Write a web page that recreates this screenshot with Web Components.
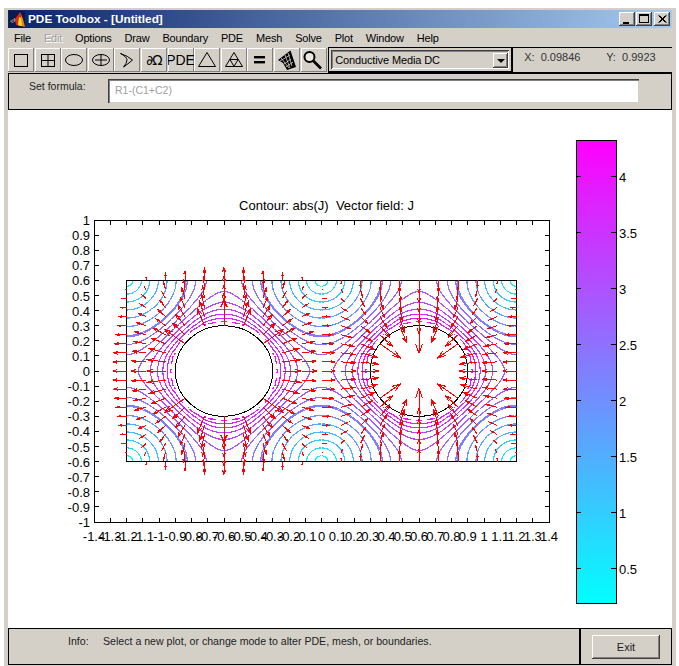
<!DOCTYPE html>
<html>
<head>
<meta charset="utf-8">
<title>PDE Toolbox</title>
<style>
    html, body { margin: 0; padding: 0; background: #fff; }
    body { font-family: "Liberation Sans", Arial, sans-serif; }
</style>
</head>
<body>
<pde-window>
    <pde-titlebar>PDE Toolbox - [Untitled]</pde-titlebar>
    <pde-menubar>
        <pde-menu>File</pde-menu>
        <pde-menu disabled>Edit</pde-menu>
        <pde-menu>Options</pde-menu>
        <pde-menu>Draw</pde-menu>
        <pde-menu>Boundary</pde-menu>
        <pde-menu>PDE</pde-menu>
        <pde-menu>Mesh</pde-menu>
        <pde-menu>Solve</pde-menu>
        <pde-menu>Plot</pde-menu>
        <pde-menu>Window</pde-menu>
        <pde-menu>Help</pde-menu>
    </pde-menubar>
    <pde-toolbar></pde-toolbar>
    <pde-formula></pde-formula>
    <pde-plot></pde-plot>
    <pde-status></pde-status>
</pde-window>

<script>
class PdeWindow extends HTMLElement {
    constructor() {
        super();
        this.attachShadow({ mode: 'open' });
    }

    connectedCallback() {
        this.shadowRoot.innerHTML = `
            <style>
                :host {
                    display: flex;
                    flex-direction: column;
                    box-sizing: border-box;
                    width: 672px;
                    height: 658px;
                    margin: 8px 0 0 4px;
                    padding: 2px 4px 0 4px;
                    background: #d4d0c8;
                    overflow: hidden;
                }
            </style>
            <slot></slot>
        `;
    }
}

class PdeTitlebar extends HTMLElement {
    constructor() {
        super();
        this.attachShadow({ mode: 'open' });
    }

    connectedCallback() {
        this.shadowRoot.innerHTML = `
            <style>
                :host {
                    display: flex;
                    align-items: center;
                    height: 18px;
                    flex: none;
                    background: linear-gradient(90deg, #0a246a, #a6caf0);
                    color: #fff;
                    font: bold 11.8px "Liberation Sans", Arial, sans-serif;
                }
                svg { display: block; margin: 0 3px 0 1px; }
                .text { flex: 1; }
                .buttons { display: flex; margin-right: 2px; }
                .btn {
                    display: block;
                    width: 16px;
                    height: 14px;
                    background: #d4d0c8;
                    box-shadow: inset -1px -1px #404040, inset 1px 1px #fff, inset -2px -2px #808080;
                }
            </style>
            <svg width="16" height="17" viewBox="0 0 16 17">
                <rect width="16" height="17" fill="#0a1a50"/>
                <polygon points="1,10 6,7 7,10 3,12" fill="#8090a0"/>
                <polygon points="2,10 5,8 5,11 3,11" fill="#405060"/>
                <polygon points="6,8 11,1 12,6 10,15 7,14" fill="#e02808"/>
                <polygon points="11,1 14,8 16,16 12,15 10,15 12,6" fill="#f08010"/>
                <polygon points="10,6 12,7 13,15 9,14" fill="#f8e020"/>
            </svg>
            <span class="text"><slot></slot></span>
            <span class="buttons">
                <svg class="btn" style="margin:0 0 0 1px" viewBox="0 0 16 14"><rect x="4" y="10" width="6" height="2" fill="#000"/></svg>
                <svg class="btn" style="margin:0 0 0 1px" viewBox="0 0 16 14"><rect x="3.5" y="2.5" width="9" height="8" fill="none" stroke="#000"/><rect x="3" y="2" width="10" height="2" fill="#000"/></svg>
                <svg class="btn" style="margin:0 0 0 2px" viewBox="0 0 16 14"><path d="M4.5 3.5l7 7M5.5 3.5l7 7M11.5 3.5l-7 7M12.5 3.5l-7 7" stroke="#000" fill="none"/></svg>
            </span>
        `;
    }
}

class PdeMenubar extends HTMLElement {
    constructor() {
        super();
        this.attachShadow({ mode: 'open' });
    }

    connectedCallback() {
        this.shadowRoot.innerHTML = `
            <style>
                :host {
                    display: flex;
                    align-items: center;
                    flex: none;
                    height: 19px;
                }
            </style>
            <slot></slot>
        `;
    }
}

class PdeMenu extends HTMLElement {
    constructor() {
        super();
        this.attachShadow({ mode: 'open' });
    }

    connectedCallback() {
        this.shadowRoot.innerHTML = `
            <style>
                :host {
                    display: block;
                    padding: 0 7px 0 6px;
                    font: 11px "Liberation Sans", Arial, sans-serif;
                    letter-spacing: -0.2px;
                    color: #000;
                }
                :host([disabled]) {
                    color: #a0a0a0;
                    text-shadow: 1px 1px #fff;
                }
            </style>
            <slot></slot>
        `;
    }
}

class ToolButton extends HTMLElement {
    constructor() {
        super();
        this.attachShadow({ mode: 'open' });
    }

    connectedCallback() {
        this.shadowRoot.innerHTML = `
            <style>
                :host {
                    display: flex;
                    align-items: center;
                    justify-content: center;
                    box-sizing: border-box;
                    width: 26px;
                    height: 24px;
                    margin-right: 0.6px;
                    background: #d4d0c8;
                    box-shadow: inset -1px -1px #808080, inset 1px 1px #fff;
                    font: 14px "Liberation Sans", Arial, sans-serif;
                    color: #000;
                    overflow: hidden;
                }
            </style>
            <slot></slot>
        `;
    }
}

class PdeToolbar extends HTMLElement {
    constructor() {
        super();
        this.attachShadow({ mode: 'open' });
    }

    connectedCallback() {
        const line = 'fill="none" stroke="#000" stroke-width="1"';
        const icon = (body) => `<svg width="24" height="22" viewBox="0 0 24 22">${body}</svg>`;
        const icons = [
            `<rect x="5.5" y="5.5" width="13" height="12" ${line}/>`,
            `<rect x="5.5" y="5.5" width="13" height="12" ${line}/><path d="M12 5.5v12M5.5 11.5h13" ${line}/>`,
            `<ellipse cx="12" cy="11" rx="8.5" ry="5.5" ${line}/>`,
            `<ellipse cx="12" cy="11" rx="8.5" ry="5.5" ${line}/><path d="M12 6v10M6 11h12" ${line}/>`,
            `<path d="M5.5 4.5Q13 7 17.5 11 13 15 8.5 18 12 14 12 11 12 8 5.5 4.5z" ${line}/>`,
            null,
            null,
            `<polygon points="12,3.5 20.5,17.5 3.5,17.5" ${line}/>`,
            `<polygon points="12,3.5 20.5,17.5 3.5,17.5" ${line}/><polygon points="8,10.5 16,10.5 12,17.5" ${line}/>`,
            `<rect x="6" y="7" width="11" height="2.4" fill="#000"/><rect x="6" y="12" width="11" height="2.4" fill="#000"/>`,
            `<polygon points="3,11 15.5,1.5 21,18 12,21 8,14" fill="#000"/><path d="M6 9l8 10M10 6l5 13M13 4l4 13M5 12l10-6M9 15l7-5M11 18l7-5" stroke="#d4d0c8" stroke-width=".8" fill="none"/>`,
            `<circle cx="7.5" cy="8" r="5" fill="#e8e8e0" stroke="#000" stroke-width="2"/><path d="M11.5 12l7.5 7.5" stroke="#000" stroke-width="2.6"/>`
        ];
        const buttons = icons.map((body, i) => {
            if (i === 5) return '<tool-button><span class="omega">∂Ω</span></tool-button>';
            if (i === 6) return '<tool-button><span class="pde">PDE</span></tool-button>';
            return `<tool-button>${icon(body)}</tool-button>`;
        }).join('');
        this.shadowRoot.innerHTML = `
            <style>
                :host {
                    display: flex;
                    flex: none;
                    height: 26px;
                    font: 11px "Liberation Sans", Arial, sans-serif;
                    color: #000;
                }
                .tools { display: flex; align-items: flex-end; padding-bottom: 1px; }
                .omega { font: 13.5px "DejaVu Sans", sans-serif; letter-spacing: -1px; }
                .pde { font-size: 14px; }
                .mode {
                    box-sizing: border-box;
                    width: 185px;
                    margin-left: 1px;
                    padding: 2px;
                    border: 1px solid #000;
                    border-bottom-width: 2px;
                    border-right-width: 2px;
                    display: flex;
                }
                .combo {
                    flex: 1;
                    display: flex;
                    align-items: center;
                    justify-content: space-between;
                    padding: 1px 1px 0 4px;
                    letter-spacing: -0.12px;
                    box-shadow: inset 1px 1px #404040, inset -1px -1px #fff, inset 2px 2px #808080;
                }
                .drop {
                    position: relative;
                    width: 15px;
                    height: 15px;
                    background: #d4d0c8;
                    box-shadow: inset -1px -1px #404040, inset 1px 1px #fff, inset -2px -2px #808080;
                }
                .drop::after {
                    content: '';
                    position: absolute;
                    left: 4px;
                    top: 6px;
                    border: 4px solid transparent;
                    border-top-color: #000;
                    border-bottom: 0;
                }
                .coords {
                    flex: 1;
                    display: flex;
                    padding: 3px 0 0 11px;
                    box-sizing: border-box;
                    color: #333;
                    border-top: 1px solid #000;
                    border-bottom: 1px solid #000;
                }
                .coords span:first-child { width: 82px; }
            </style>
            <div class="tools">${buttons}</div>
            <div class="mode">
                <div class="combo">Conductive Media DC<span class="drop"></span></div>
            </div>
            <div class="coords"><span>X:&nbsp; 0.09846</span><span>Y:&nbsp; 0.9923</span></div>
        `;
    }
}

class PdeFormula extends HTMLElement {
    constructor() {
        super();
        this.attachShadow({ mode: 'open' });
    }

    connectedCallback() {
        this.shadowRoot.innerHTML = `
            <style>
                :host {
                    display: flex;
                    flex: none;
                    box-sizing: border-box;
                    height: 37px;
                    border: 1px solid #000;
                    font: 10.5px "Liberation Sans", Arial, sans-serif;
                    color: #222;
                }
                .label { width: 99px; padding: 6px 0 0 20px; box-sizing: border-box; }
                .input {
                    box-sizing: border-box;
                    width: 531px;
                    height: 24px;
                    margin-top: 5px;
                    padding: 5px 0 0 7px;
                    background: #fff;
                    color: #a0a0a0;
                    box-shadow: inset 1px 1px #404040, inset 2px 2px #808080, inset -1px -1px #d4d0c8;
                }
            </style>
            <div class="label">Set formula:</div>
            <div class="input">R1-(C1+C2)</div>
        `;
    }
}

// V = 1 on C1, V = -1 on C2, V = 0 on the rectangle; J = -grad V
function solveField() {
    const h = 0.006, nx = 400, ny = 200;
    const w = nx + 1;
    const V = new Float64Array(w * (ny + 1));
    const fixed = new Uint8Array(w * (ny + 1));
    const inHole = new Uint8Array(w * (ny + 1));
    const nearHole = new Uint8Array(w * (ny + 1));
    for (let j = 0; j <= ny; j++) {
        for (let i = 0; i <= nx; i++) {
            const x = -1.2 + i * h, y = -0.6 + j * h, k = i + j * w;
            const d1 = Math.hypot(x + 0.6, y), d2 = Math.hypot(x - 0.6, y);
            if (i === 0 || j === 0 || i === nx || j === ny) fixed[k] = 1;
            if (d1 <= 0.3 + 1e-9) { fixed[k] = 1; V[k] = 1; }
            if (d2 <= 0.3 + 1e-9) { fixed[k] = 1; V[k] = -1; }
            if (d1 < 0.3 - 1e-9 || d2 < 0.3 - 1e-9) inHole[k] = 1;
            // the staircase edge makes |J| noisy right beside the circles
            if (d1 < 0.315 || d2 < 0.315) nearHole[k] = 1;
        }
    }
    const omega = 1.975;
    for (let it = 0; it < 900; it++) {
        for (let j = 1; j < ny; j++) {
            for (let i = 1; i < nx; i++) {
                const k = i + j * w;
                if (fixed[k]) continue;
                V[k] += omega * (0.25 * (V[k - 1] + V[k + 1] + V[k - w] + V[k + w]) - V[k]);
            }
        }
    }
    const grad = (i, j) => {
        const k = i + j * w;
        let gx, gy;
        if (i === 0 || inHole[k - 1]) gx = (V[k + 1] - V[k]) / h;
        else if (i === nx || inHole[k + 1]) gx = (V[k] - V[k - 1]) / h;
        else gx = (V[k + 1] - V[k - 1]) / (2 * h);
        if (j === 0 || inHole[k - w]) gy = (V[k + w] - V[k]) / h;
        else if (j === ny || inHole[k + w]) gy = (V[k] - V[k - w]) / h;
        else gy = (V[k + w] - V[k - w]) / (2 * h);
        return [-gx, -gy];
    };
    return { h, nx, ny, w, inHole, nearHole, grad };
}

const toPx = (x) => 321.5 + x * 162.5;
const toPy = (y) => 371 - y * 151;
const coolColor = (t) => {
    const c = Math.max(0, Math.min(1, t));
    return `rgb(${Math.round(c * 255)},${Math.round((1 - c) * 255)},255)`;
};

// wider steps at low |J|, tighter ones round the circles
function contourLevels() {
    const out = [];
    for (let v = 0.24; v < 2.2; v += 0.32) out.push(v);
    for (let v = 2.2; v < 4.3; v += 0.23) out.push(v);
    return out;
}

function contourPaths(f) {
    const step = 2, top = 4.33;
    const cols = Math.floor(f.nx / step) + 1, rows = Math.floor(f.ny / step) + 1;
    const mag = new Float64Array(cols * rows);
    for (let r = 0; r < rows; r++) {
        for (let c = 0; c < cols; c++) {
            const i = c * step, j = r * step;
            if (f.nearHole[i + j * f.w]) { mag[c + r * cols] = NaN; continue; }
            const g = f.grad(i, j);
            mag[c + r * cols] = Math.hypot(g[0], g[1]);
        }
    }
    const dx = step * f.h;
    return contourLevels().map((lev) => {
        let d = '';
        for (let r = 0; r < rows - 1; r++) {
            for (let c = 0; c < cols - 1; c++) {
                const a = mag[c + r * cols], b = mag[c + 1 + r * cols];
                const e = mag[c + 1 + (r + 1) * cols], g = mag[c + (r + 1) * cols];
                if (a !== a || b !== b || e !== e || g !== g) continue;
                const pts = [];
                const x0 = -1.2 + c * dx, y0 = -0.6 + r * dx;
                if ((a < lev) !== (b < lev)) pts.push([x0 + dx * (lev - a) / (b - a), y0]);
                if ((b < lev) !== (e < lev)) pts.push([x0 + dx, y0 + dx * (lev - b) / (e - b)]);
                if ((g < lev) !== (e < lev)) pts.push([x0 + dx * (lev - g) / (e - g), y0 + dx]);
                if ((a < lev) !== (g < lev)) pts.push([x0, y0 + dx * (lev - a) / (g - a)]);
                for (let p = 0; p + 1 < pts.length; p += 2) {
                    d += `M${toPx(pts[p][0]).toFixed(1)} ${toPy(pts[p][1]).toFixed(1)}L${toPx(pts[p + 1][0]).toFixed(1)} ${toPy(pts[p + 1][1]).toFixed(1)}`;
                }
            }
        }
        return `<path d="${d}" stroke="${coolColor(lev / top)}"/>`;
    }).join('');
}

function arrowPath(f) {
    const k = 0.03, alpha = 0.33, beta = 0.33;
    let d = '';
    for (let a = 0; a <= 20; a++) {
        for (let b = 0; b <= 20; b++) {
            const i = a * 20, j = b * 10;
            if (f.inHole[i + j * f.w]) continue;
            const g = f.grad(i, j);
            const x = -1.2 + i * f.h, y = -0.6 + j * f.h;
            const u = g[0] * k, v = g[1] * k;
            const P = (px, py) => `${toPx(px).toFixed(1)} ${toPy(py).toFixed(1)}`;
            d += `M${P(x, y)}L${P(x + u, y + v)}`;
            d += `M${P(x + u - alpha * (u + beta * v), y + v - alpha * (v - beta * u))}L${P(x + u, y + v)}`;
            d += `L${P(x + u - alpha * (u - beta * v), y + v - alpha * (v + beta * u))}`;
        }
    }
    return d;
}

class PdePlot extends HTMLElement {
    constructor() {
        super();
        this.attachShadow({ mode: 'open' });
    }

    connectedCallback() {
        const field = solveField();
        let ticks = '', labels = '';
        for (let n = -14; n <= 14; n++) {
            const x = toPx(n / 10);
            ticks += `M${x} 220v4.5M${x} 522v-4.5`;
            const text = n % 10 === 0 ? String(n / 10) : (n / 10).toFixed(1);
            labels += `<text x="${x}" y="540.5" text-anchor="middle">${text}</text>`;
        }
        for (let n = -10; n <= 10; n++) {
            const y = toPy(n / 10);
            ticks += `M94 ${y}h4.5M549 ${y}h-4.5`;
            const text = n % 10 === 0 ? String(n / 10) : (n / 10).toFixed(1);
            labels += `<text x="90" y="${y + 5}" text-anchor="end">${text}</text>`;
        }
        let barTicks = '', barLabels = '';
        for (let n = 1; n <= 8; n++) {
            const y = 176.7 + (8 - n) * 56;
            barTicks += `M576 ${y}h5M616 ${y}h-5`;
            barLabels += `<text x="619" y="${y + 5}">${n / 2}</text>`;
        }
        this.shadowRoot.innerHTML = `
            <style>
                :host {
                    display: block;
                    flex: none;
                    height: 518px;
                    background: #fff;
                }
                svg { display: block; }
                text { font: 13px "Liberation Sans", Arial, sans-serif; fill: #000; }
            </style>
            <svg width="664" height="518" viewBox="8 110 664 518">
                <defs>
                    <linearGradient id="cool" x1="0" y1="1" x2="0" y2="0">
                        <stop offset="0" stop-color="#00ffff"/>
                        <stop offset="1" stop-color="#ff00ff"/>
                    </linearGradient>
                </defs>
                <text x="326.5" y="209.5" text-anchor="middle" xml:space="preserve">Contour: abs(J)  Vector field: J</text>
                <g shape-rendering="crispEdges" fill="none">
                    <rect x="94.5" y="220.5" width="455" height="302" stroke="#000"/>
                    <path d="${ticks}" stroke="#000"/>
                    <g stroke-width="1.2">${contourPaths(field)}</g>
                    <rect x="126.5" y="280.5" width="390" height="181" stroke="#000"/>
                    <ellipse cx="224" cy="371" rx="48.75" ry="45.3" stroke="#000"/>
                    <ellipse cx="419" cy="371" rx="48.75" ry="45.3" stroke="#000"/>
                    <path d="${arrowPath(field)}" stroke="#ff0000"/>
                    <rect x="576.5" y="140.5" width="40" height="463" fill="url(#cool)" stroke="#000"/>
                    <path d="${barTicks}" stroke="#000"/>
                </g>
                ${labels}
                ${barLabels}
            </svg>
        `;
    }
}

class PdeStatus extends HTMLElement {
    constructor() {
        super();
        this.attachShadow({ mode: 'open' });
    }

    connectedCallback() {
        this.shadowRoot.innerHTML = `
            <style>
                :host {
                    display: flex;
                    flex: none;
                    box-sizing: border-box;
                    height: 37px;
                    border: 1px solid #000;
                    font: 10.6px "Liberation Sans", Arial, sans-serif;
                    color: #222;
                }
                .info {
                    flex: 1;
                    display: flex;
                    padding: 6px 0 0 59px;
                    border-right: 2px solid #000;
                }
                .info span:first-child { width: 35px; }
                .side {
                    width: 90px;
                    display: flex;
                    align-items: center;
                    justify-content: center;
                }
                .exit {
                    box-sizing: border-box;
                    width: 68px;
                    height: 24px;
                    line-height: 24px;
                    text-align: center;
                    font-size: 11px;
                    background: #d4d0c8;
                    box-shadow: inset -1px -1px #404040, inset 1px 1px #fff, inset -2px -2px #808080;
                }
            </style>
            <div class="info"><span>Info:</span><span>Select a new plot, or change mode to alter PDE, mesh, or boundaries.</span></div>
            <div class="side"><div class="exit">Exit</div></div>
        `;
    }
}

customElements.define('pde-window', PdeWindow);
customElements.define('pde-titlebar', PdeTitlebar);
customElements.define('pde-menubar', PdeMenubar);
customElements.define('pde-menu', PdeMenu);
customElements.define('tool-button', ToolButton);
customElements.define('pde-toolbar', PdeToolbar);
customElements.define('pde-formula', PdeFormula);
customElements.define('pde-plot', PdePlot);
customElements.define('pde-status', PdeStatus);
</script>
</body>
</html>
